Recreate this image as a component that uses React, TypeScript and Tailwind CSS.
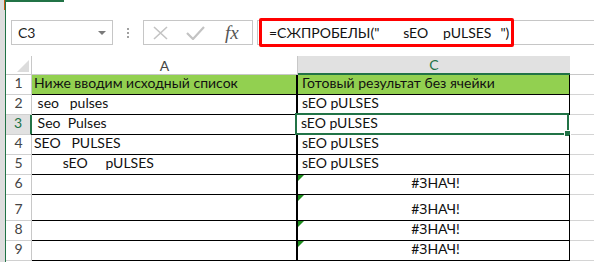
import React from 'react';

const font = { fontFamily: 'Lato, "Liberation Sans", sans-serif' };

type Row = {
  n: number;
  a?: string;
  c?: string;
  h: string;
  err?: boolean;
  head?: boolean;
};

const rows: Row[] = [
  { n: 1, a: 'Ниже вводим исходный список', c: 'Готовый результат без ячейки', h: 'h-[20px]', head: true },
  { n: 2, a: ' seo   pulses', c: 'sEO pULSES', h: 'h-[20px]' },
  { n: 3, a: ' Seo  Pulses', c: 'sEO pULSES', h: 'h-[20px]' },
  { n: 4, a: 'SEO   PULSES', c: 'sEO pULSES', h: 'h-[20px]' },
  { n: 5, a: '        sEO     pULSES', c: 'sEO pULSES', h: 'h-[20px]' },
  { n: 6, c: '#ЗНАЧ!', h: 'h-[20px]', err: true },
  { n: 7, c: '#ЗНАЧ!', h: 'h-[26px]', err: true },
  { n: 8, c: '#ЗНАЧ!', h: 'h-[20px]', err: true },
  { n: 9, c: '#ЗНАЧ!', h: 'h-[20px]', err: true },
];

const FormulaBar = () => (
  <div className="relative h-[25px] flex items-stretch">
    {/* Name box */}
    <div className="ml-[5px] w-[102px] border border-[#c6c6c6] flex items-center justify-between pl-[6px] pr-[6px]">
      <span className="text-[14px] text-[#222]">C3</span>
      <span className="w-0 h-0 border-l-[4px] border-r-[4px] border-t-[4px] border-l-transparent border-r-transparent border-t-[#7a7a7a]" />
    </div>
    {/* Separator dots */}
    <div className="w-[30px] flex flex-col items-center justify-center gap-[2px]">
      <span className="w-[2px] h-[2px] bg-[#a0a0a0]" />
      <span className="w-[2px] h-[2px] bg-[#a0a0a0]" />
      <span className="w-[2px] h-[2px] bg-[#a0a0a0]" />
    </div>
    {/* Cancel / Enter / fx */}
    <div className="w-[110px] border border-[#c6c6c6] flex items-center pl-[9px] gap-[18px]">
      <svg width="15" height="14" viewBox="0 0 15 14">
        <path d="M1 1 L14 13 M14 1 L1 13" stroke="#c3c3c3" strokeWidth="1.6" fill="none" />
      </svg>
      <svg width="19" height="14" viewBox="0 0 19 14">
        <path d="M1 7 L7 13 L18 1" stroke="#c3c3c3" strokeWidth="2.2" fill="none" />
      </svg>
      <span
        className="text-[19px] italic text-[#555] ml-[2px] leading-none"
        style={{ fontFamily: '"Liberation Serif", "DejaVu Serif", serif' }}
      >
        fx
      </span>
    </div>
    {/* Formula input */}
    <div className="ml-[4px] flex-1 border border-[#c6c6c6] border-r-0 flex items-center pl-[11px]">
      <span className="text-[14px] text-[#111] whitespace-pre [word-spacing:-0.6px]">=СЖПРОБЕЛЫ("        sEO     pULSES   ")</span>
    </div>
    {/* Red highlight annotation */}
    <div className="absolute left-[253px] top-[-2px] w-[255px] h-[29px] border-[3px] border-[#ff0000] rounded-[2px] pointer-events-none" />
  </div>
);

const HeaderRow = () => (
  <div className="flex h-[19px] border-b border-[#c8c8c8]">
    <div className="w-[26px] border-r border-[#c8c8c8] relative">
      <svg className="absolute right-[2px] bottom-[2px]" width="12" height="12" viewBox="0 0 12 12">
        <path d="M12 0 L12 12 L0 12 Z" fill="#dcdcdc" />
      </svg>
    </div>
    <div className="w-[266px] border-r border-[#c8c8c8] flex items-center justify-center text-[14px] text-[#444]">A</div>
    <div className="w-[272px] bg-[#e1e1e1] border-b-2 border-[#217346] -mb-[1px] flex items-center justify-center text-[14px] text-[#217346]">C</div>
    <div className="flex-1" />
  </div>
);

const GridRow = ({ r }: { r: Row }) => {
  const sel = r.n === 3;
  return (
    <div className={`flex ${r.h}`}>
      <div
        className={`w-[26px] flex items-end justify-center pb-[1px] text-[14px] border-b border-[#d0d0d0] ${
          sel ? 'bg-[#e1e1e1] text-[#217346] border-r-2 border-r-[#217346]' : 'text-[#444] border-r border-r-[#c8c8c8]'
        }`}
      >
        {r.n}
      </div>
      <div
        className={`w-[266px] border-b border-r-2 border-black flex items-end pl-[2px] pb-[1px] text-[14px] text-[#111] whitespace-pre ${
          r.head ? 'bg-[#92d050]' : ''
        } ${sel ? '-ml-[1px] pl-[3px]' : ''}`}
      >
        {r.a}
      </div>
      <div
        className={`relative w-[272px] border-b border-r border-black flex items-end pb-[1px] text-[14px] text-[#111] whitespace-pre ${
          r.head ? 'bg-[#92d050]' : ''
        } ${r.err ? 'justify-center' : 'pl-[4px]'}`}
      >
        {r.err && (
          <svg className="absolute left-0 top-0" width="6" height="6" viewBox="0 0 6 6">
            <path d="M0 0 L6 0 L0 6 Z" fill="#1e8c1e" />
          </svg>
        )}
        <span className={r.err ? 'pl-[4px]' : ''}>{r.c}</span>
        {sel && (
          <>
            <div className="absolute -left-[2px] -top-[2px] -right-[1px] -bottom-[1px] border-2 border-[#217346] pointer-events-none" />
            <div className="absolute -right-[3px] -bottom-[3px] w-[5px] h-[5px] bg-[#217346] border border-white box-content" />
          </>
        )}
      </div>
      <div className="flex-1 border-b border-[#d4d4d4]" />
    </div>
  );
};

export default function App() {
  return (
    <div className="w-[594px] h-[262px] bg-white flex overflow-hidden" style={font}>
      {/* window edge */}
      <div className="relative w-[6px] flex">
        <div className="w-[5px] bg-[#dedede]" />
        <div className="w-[1px] bg-[#217346]" />
        <div className="absolute left-[4px] top-0 w-[1px] h-[10px] bg-[#c55a11]" />
      </div>

      <div className="flex-1 flex flex-col">
        <div className="h-[20px]">
          <div className="w-[58px] h-[2px] bg-[#217346]" />
        </div>
        <FormulaBar />
        <div className="h-[11px]" />
        <HeaderRow />
        {rows.map((r) => (
          <GridRow key={r.n} r={r} />
        ))}
      </div>
    </div>
  );
}
